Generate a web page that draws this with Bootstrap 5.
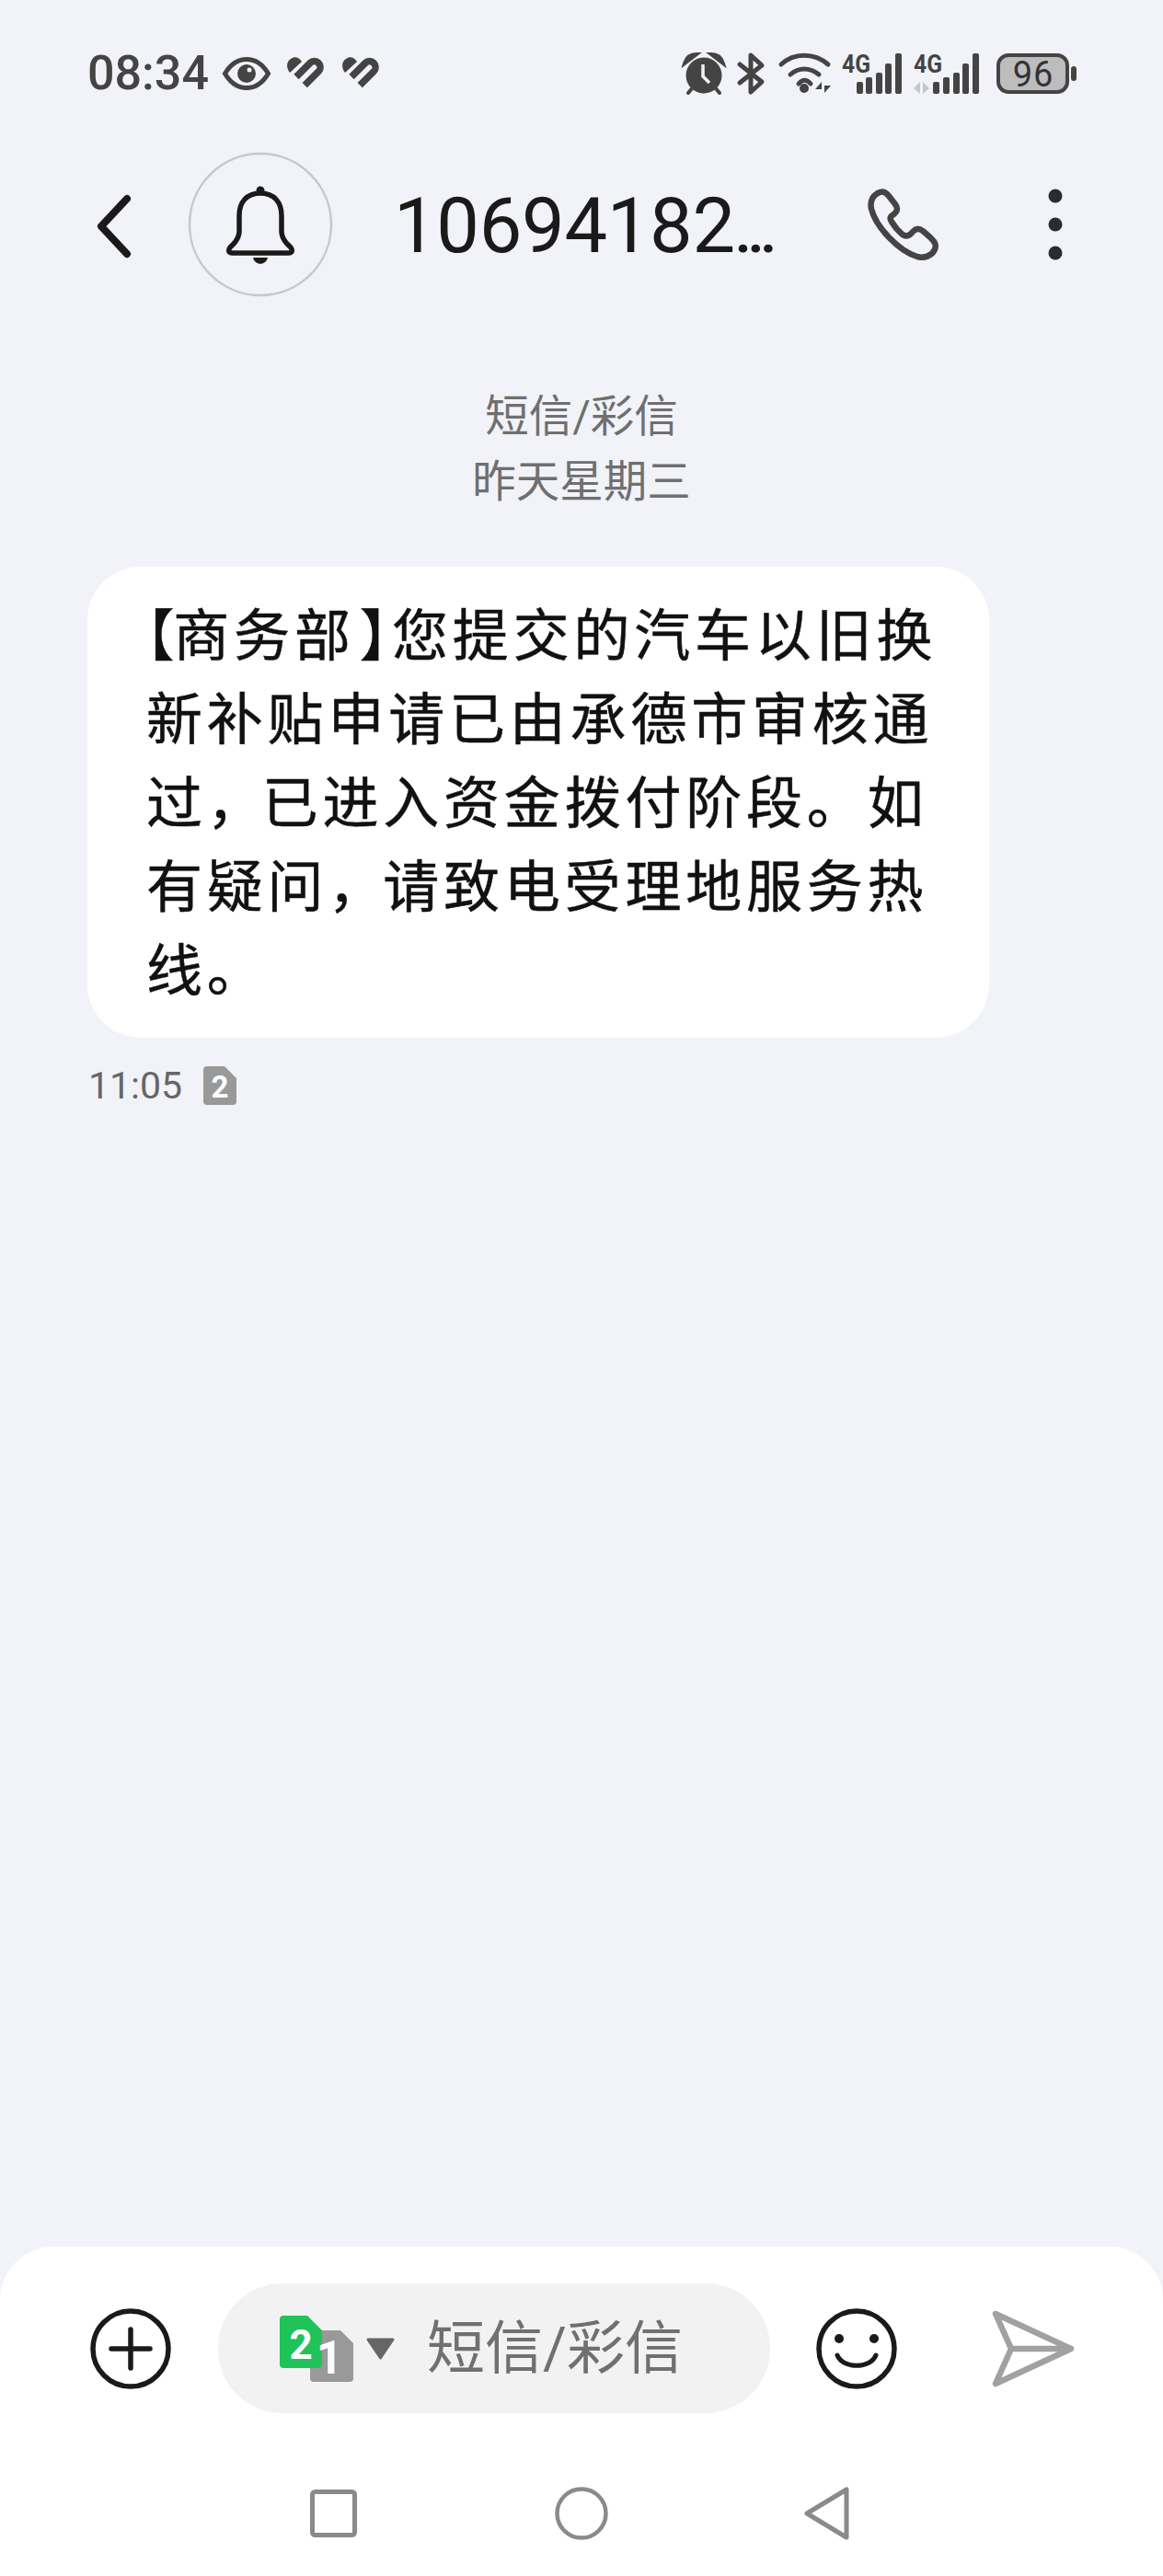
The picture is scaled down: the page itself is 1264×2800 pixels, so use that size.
<!DOCTYPE html>
<html lang="zh">
<head>
<meta charset="utf-8">
<title>短信</title>
<link href="https://cdn.jsdelivr.net/npm/bootstrap@5.3.0/dist/css/bootstrap.min.css" rel="stylesheet">
<style>
html,body{margin:0;background:#f1f3f8}
.phone{width:1264px;height:2800px;background:#f1f3f8;font-family:Roboto,"Noto Sans CJK SC",sans-serif;overflow:hidden}
svg{display:block;flex:none;overflow:visible}
.stat{height:44px;margin-top:58px;padding:0 0 0 95px;color:#444}
.clock{font-size:52px;font-weight:500;line-height:44px;width:147px;flex:none;color:#444}
.topnav{height:156px;margin-top:64px}
.title{font-size:83px;line-height:100px;color:#1a1a1a;width:441px;flex:none;margin-left:67px;padding-top:12px;letter-spacing:-.3px;white-space:nowrap}
.dots{font-size:60px;font-weight:700;letter-spacing:0}
.chev{margin:4px 0 0 105px}
.stampbox{margin-top:96px;color:#6f6f6f;font-size:47.500px;line-height:71px;text-align:center}
.bubble{margin:56px 0 0 95px;width:980px;height:512px;background:#fff;border-radius:58px;padding:31px 0 0 64px;font-size:61px;line-height:91px;color:#111;letter-spacing:4.800px;white-space:nowrap;-webkit-text-stroke:.5px #111}
.brk{font-feature-settings:"halt"}
.brk-open{letter-spacing:-1.200px}
.brk-close{margin-left:5px}
.cma{letter-spacing:-1.200px}
.meta{margin:30px 0 0 96px;height:44px;color:#666;font-size:41px;line-height:44px}
.dock{height:358px;background:#fff;border-radius:58px 58px 0 0}
.inputrow{height:141px;margin-top:40px;padding-left:98px}
.pill{width:600px;height:141px;flex:none;background:#f2f2f2;border-radius:70px;margin-left:51px;margin-right:50px;padding-left:67px}
.pilltxt{font-size:63px;line-height:70px;color:#707070;margin-left:36px;white-space:nowrap}
.sysnav{margin-top:80px;padding-left:337px}
</style>
</head>
<body>
<div class="phone d-flex flex-column">

  <div class="stat d-flex align-items-center">
    <div class="clock">08:34</div>
    <svg width="52" height="36" viewBox="0 0 52 36"><path d="M2.500 18C9 7 17 2.500 26 2.500S43 7 49.500 18C43 29 35 33.500 26 33.500S9 29 2.500 18Z" fill="none" stroke="#444" stroke-width="5"/><circle cx="26" cy="18" r="10" fill="#444"/><circle cx="29" cy="14" r="2.500" fill="#f1f3f8"/></svg>
    <svg style="margin-left:18px" width="42" height="36" viewBox="0 0 42 36"><path d="M3 17C-1 12 -1 5 4 2 8-1 13 0 16 5Z" fill="#444"/><path d="M10 21.500 25 6.500A6.500 6.500 0 0 1 34.200 15.700L19.200 30.700" fill="none" stroke="#444" stroke-width="7.500"/></svg>
    <svg style="margin-left:18px" width="42" height="36" viewBox="0 0 42 36"><path d="M3 17C-1 12 -1 5 4 2 8-1 13 0 16 5Z" fill="#444"/><path d="M10 21.500 25 6.500A6.500 6.500 0 0 1 34.200 15.700L19.200 30.700" fill="none" stroke="#444" stroke-width="7.500"/></svg>

    <svg style="margin-left:329px" width="44" height="44" viewBox="0 0 44 44"><circle cx="22" cy="24" r="19.500" fill="#444"/><path d="M1 11C3 4 8 1 14 1ZM43 11C41 4 36 1 30 1ZM5 43l5-6M39 43l-5-6" stroke="#444" stroke-width="4" fill="#444" stroke-linecap="round"/><path d="M21 12v13l7 7" fill="none" stroke="#f1f3f8" stroke-width="3.500"/></svg>
    <svg style="margin-left:15px" width="30" height="44" viewBox="0 0 30 44"><path d="M2 12 26 31 14 42V2L26 13 2 32" fill="none" stroke="#444" stroke-width="5" stroke-linejoin="round" stroke-linecap="round"/></svg>
    <svg style="margin-left:15px" width="56" height="44" viewBox="0 0 56 44"><path d="M2 12C16 -1 38 -1 53 12M12 23C21 15 33 15 43 23M21 33C25 28 30 28 34 33" fill="none" stroke="#444" stroke-width="5" stroke-linecap="round"/><circle cx="27" cy="38" r="5" fill="#444"/><path d="M46 44V31l-7 8h7ZM49 30v13l7-8h-7Z" fill="#444"/></svg>
    <svg style="margin-left:12px" width="66" height="44" viewBox="0 0 66 44"><text x="0" y="21" font-family="Roboto,sans-serif" font-size="28" font-weight="700" fill="#444" textLength="31" lengthAdjust="spacingAndGlyphs">4G</text><g fill="#444"><rect x="16" y="31" width="7" height="13" rx="2"/><rect x="26" y="26" width="7" height="18" rx="2"/><rect x="37" y="21" width="7" height="23" rx="2"/><rect x="47" y="11" width="7" height="33" rx="2"/><rect x="58" y="0" width="7" height="44" rx="2"/></g></svg>
    <svg style="margin-left:12px" width="73" height="44" viewBox="0 0 73 44"><text x="0" y="21" font-family="Roboto,sans-serif" font-size="28" font-weight="700" fill="#444" textLength="31" lengthAdjust="spacingAndGlyphs">4G</text><path d="M7 31v13L0 38ZM10 31v13l7-6Z" fill="#c6c7ca"/><g fill="#444"><rect x="21" y="31" width="7" height="13" rx="2"/><rect x="32" y="26" width="7" height="18" rx="2"/><rect x="43" y="21" width="7" height="23" rx="2"/><rect x="53" y="11" width="7" height="33" rx="2"/><rect x="64" y="0" width="7" height="44" rx="2"/></g></svg>
    <svg style="margin-left:17px" width="87" height="44" viewBox="0 0 87 44"><rect x="2" y="2" width="75" height="40" rx="11" fill="#bdbdbd" stroke="#444" stroke-width="4"/><rect x="81" y="14" width="6" height="16" rx="3" fill="#444"/><text x="40" y="36" text-anchor="middle" font-family="Roboto,sans-serif" font-size="38" fill="#333" letter-spacing="1">96</text></svg>
  </div>

  <div class="topnav d-flex align-items-center">
    <svg class="chev" width="38" height="70" viewBox="0 0 38 70"><path d="M33 5 5 35l28 30" fill="none" stroke="#1a1a1a" stroke-width="8" stroke-linecap="round" stroke-linejoin="round"/></svg>
    <svg style="margin-left:62px" width="156" height="156" viewBox="0 0 156 156"><circle cx="78" cy="78" r="77" fill="none" stroke="#c7c8cb" stroke-width="2.500"/><path d="M78 44C63 44 55 54 55 68V85C55 92 52 96 48 100 43 104 42 109 47 109H109C114 109 113 104 108 100 104 96 101 92 101 85V68C101 54 93 44 78 44Z" fill="none" stroke="#1a1a1a" stroke-width="5.500" stroke-linejoin="round"/><circle cx="78" cy="41" r="4.500" fill="#1a1a1a"/><path d="M70 114H86C84 123 72 123 70 114Z" fill="#1a1a1a"/></svg>
    <div class="title">10694182<span class="dots">…</span></div>
    <svg style="margin-left:74px" width="78" height="78" viewBox="0 0 78 78"><path d="M13 4C6 7 2 13 4 22 9 42 34 68 54 74 62 76 70 73 73 66 75 61 73 58 68 53L60 46C56 43 53 43 50 46L46 50C43 52 41 52 38 50 33 46 29 41 26 36 24 33 24 31 27 29 33 25 33 21 30 17L23 8C20 4 16 3 13 4Z" fill="none" stroke="#444" stroke-width="6.500" stroke-linejoin="round"/></svg>
    <svg style="margin-left:118px" width="16" height="78" viewBox="0 0 16 78" fill="#2b2c30"><circle cx="8" cy="8" r="7.500"/><circle cx="8" cy="39" r="7.500"/><circle cx="8" cy="70" r="7.500"/></svg>
  </div>

  <div class="stampbox"><div>短信/彩信</div><div>昨天星期三</div></div>

  <div class="bubble"><span class="brk brk-open">【</span>商务部<span class="brk brk-close">】</span>您提交的汽车以旧换<br>新补贴申请已由承德市审核通<br>过<span class="cma">，</span>已进入资金拨付阶段。如<br>有疑问<span class="cma">，</span>请致电受理地服务热<br>线。</div>

  <div class="meta d-flex align-items-center">
    <div>11:05</div>
    <svg style="margin-left:23px" width="36" height="42" viewBox="0 0 36 42"><path d="M4 0H23L36 13V38Q36 42 32 42H4Q0 42 0 38V4Q0 0 4 0Z" fill="#999"/><text x="18" y="34" text-anchor="middle" font-family="Roboto,sans-serif" font-size="33" font-weight="700" fill="#fff">2</text></svg>
  </div>

  <div class="flex-grow-1"></div>

  <div class="dock">
    <div class="inputrow d-flex align-items-center">
      <svg width="88" height="88" viewBox="0 0 88 88"><circle cx="44" cy="44" r="41" fill="none" stroke="#1a1a1a" stroke-width="5.500"/><path d="M44 23V65M23 44H65" stroke="#1a1a1a" stroke-width="5.500" stroke-linecap="round"/></svg>
      <div class="pill d-flex align-items-center">
        <svg width="124" height="72" viewBox="0 0 124 72"><path d="M37 16H66L80 30V68Q80 72 76 72H37Q33 72 33 68V20Q33 16 37 16Z" fill="#999"/><path d="M4 0H30L46 16V53Q46 57 42 57H4Q0 57 0 53V4Q0 0 4 0Z" fill="#1fc35a"/><text x="54" y="63" text-anchor="middle" font-family="Roboto,sans-serif" font-size="50" font-weight="700" fill="#fff">1</text><text x="23" y="47" text-anchor="middle" font-family="Roboto,sans-serif" font-size="44" font-weight="700" fill="#fff">2</text><path d="M96 26H123L109.500 46Z" fill="#666" stroke="#666" stroke-width="3" stroke-linejoin="round"/></svg>
        <div class="pilltxt">短信/彩信</div>
      </div>
      <svg width="88" height="88" viewBox="0 0 88 88"><circle cx="44" cy="44" r="41" fill="none" stroke="#1a1a1a" stroke-width="5.500"/><circle cx="25" cy="33" r="5" fill="#1a1a1a"/><circle cx="63" cy="33" r="5" fill="#1a1a1a"/><path d="M23 51C29 66 59 66 65 51" fill="none" stroke="#1a1a1a" stroke-width="5" stroke-linecap="round"/></svg>
      <svg style="margin-left:104px" width="88" height="82" viewBox="0 0 88 82"><path d="M3 3 85 41 3 79 20 41ZM20 41H85" fill="none" stroke="#a1a1a1" stroke-width="6.500" stroke-linejoin="round"/></svg>
    </div>
    <div class="sysnav d-flex align-items-center">
      <svg width="51" height="52" viewBox="0 0 51 52"><rect x="2.500" y="2.500" width="46" height="47" rx="3" fill="none" stroke="#8a8a8a" stroke-width="5"/></svg>
      <svg style="margin-left:215px" width="58" height="58" viewBox="0 0 58 58"><circle cx="29" cy="29" r="26.500" fill="none" stroke="#8a8a8a" stroke-width="4.500"/></svg>
      <svg style="margin-left:213px" width="49" height="58" viewBox="0 0 49 58"><path d="M46 3V55L3 29Z" fill="none" stroke="#8a8a8a" stroke-width="5" stroke-linejoin="round"/></svg>
    </div>
  </div>
</div>
<script src="https://cdn.jsdelivr.net/npm/bootstrap@5.3.0/dist/js/bootstrap.bundle.min.js"></script>
</body>
</html>
